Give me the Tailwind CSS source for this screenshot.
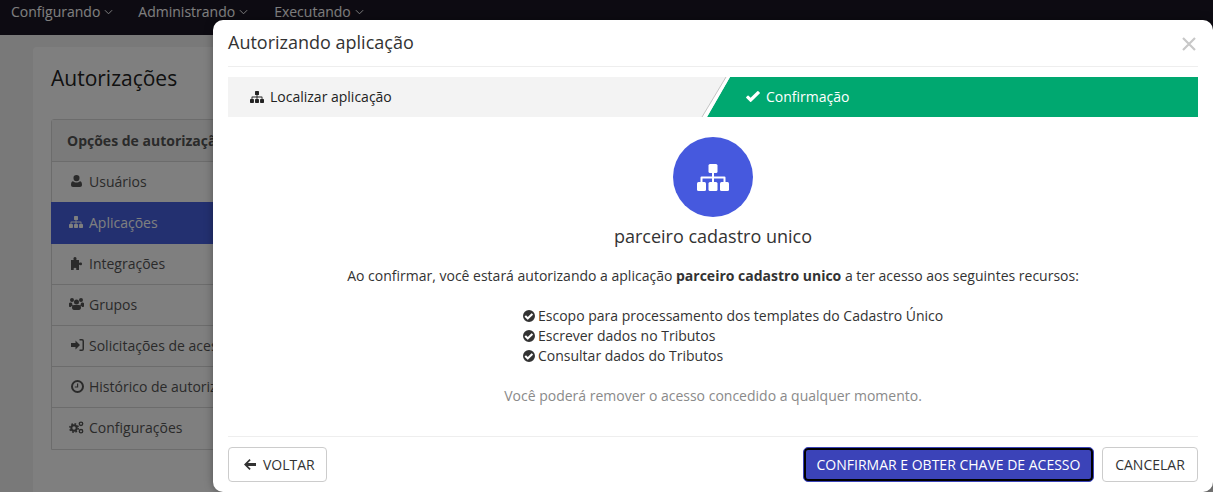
<!DOCTYPE html>
<html lang="pt">
<head>
<meta charset="utf-8">
<script src="https://cdn.jsdelivr.net/npm/@tailwindcss/browser@4"></script>
<title>Autorizações</title>
</head>
<body class="relative w-[1213px] h-[492px] overflow-hidden bg-[#f2f2f2] font-['Open_Sans',sans-serif] text-[14px] text-[#333]">
  <svg class="hidden">
    <defs>
      <symbol id="sitemap" viewBox="0 0 32 27"><g fill="currentColor"><rect x="11.500" y="0" width="9" height="9" rx="1.500"/><rect x="0" y="18" width="9" height="9" rx="1.500"/><rect x="11.500" y="18" width="9" height="9" rx="1.500"/><rect x="23" y="18" width="9" height="9" rx="1.500"/><path d="M15 9h2v3.500h10.500a1 1 0 0 1 1 1V18h-2v-3.500H17V18h-2v-3.500H5.500V18h-2v-4.500a1 1 0 0 1 1-1H15z"/></g></symbol>
      <symbol id="checkc" viewBox="0 0 24 24"><path fill="currentColor" fill-rule="evenodd" d="M12 0a12 12 0 1 1 0 24a12 12 0 0 1 0-24zM10.200 19.200l9.400-9.400a1 1 0 0 0 0-1.400l-1.600-1.600a1 1 0 0 0-1.400 0L9.500 14l-2.900-2.900a1 1 0 0 0-1.400 0l-1.600 1.600a1 1 0 0 0 0 1.400l5.200 5.100a1 1 0 0 0 1.400 0z"/></symbol>
      <symbol id="chev" viewBox="0 0 10 6"><path fill="none" stroke="currentColor" stroke-width="1.100" d="M1 1l4 4 4-4"/></symbol>
    </defs>
  </svg>

  <header class="h-[35px] bg-[#1a1624] text-white flex items-start pl-[11px] gap-[25px] text-[14px]">
    <a class="flex items-center gap-[4px] h-[23px]">Configurando <svg class="w-[9px] h-[6px] mt-[1px]"><use href="#chev"/></svg></a>
    <a class="flex items-center gap-[4px] h-[23px]">Administrando <svg class="w-[9px] h-[6px] mt-[1px]"><use href="#chev"/></svg></a>
    <a class="flex items-center gap-[4px] h-[23px] ml-[1px]">Executando <svg class="w-[9px] h-[6px] mt-[1px]"><use href="#chev"/></svg></a>
  </header>

  <main class="ml-[33px] mt-[12px] w-[1147px] h-[445px] bg-white rounded-t-[4px] px-[18px] pt-[13px]">
    <h1 class="text-[21px] leading-[36px] text-[#222] mb-[23px]">Autorizações</h1>
    <nav class="w-[400px] border border-[#d9d9d9] rounded-t-[3px] text-[14px] text-[#555]">
      <div class="h-[42px] bg-[#f5f5f5] border-b border-[#d9d9d9] pl-[15px] flex items-center font-bold">Opções de autorização</div>
      <a class="h-[41px] pb-[2px] border-b border-[#d9d9d9] flex items-center pl-[19px] gap-[7px]">
        <svg class="w-[11px] h-[12px]" viewBox="0 0 11 12"><path fill="currentColor" d="M5.500 0a3 3 0 0 1 3 3.200 3 3 0 0 1-6 0A3 3 0 0 1 5.500 0zM2 6.300c1 .9 2.200 1.200 3.500 1.200S8 7.200 9 6.300c1.300.2 2 1.500 2 3.500 0 1.400-.8 2.200-2 2.200H2C.8 12 0 11.200 0 9.800c0-2 .7-3.300 2-3.500z"/></svg>Usuários</a>
      <a class="h-[42px] pb-[2px] -mx-px -mt-px bg-[#4660e0] text-white flex items-center pl-[18px] gap-[6px]">
        <svg class="w-[14px] h-[12px]"><use href="#sitemap"/></svg><span>Aplicações</span></a>
      <a class="h-[41px] pb-[2px] border-b border-[#d9d9d9] flex items-center pl-[18px] gap-[5px]">
        <svg class="w-[14px] h-[13px]" viewBox="0 0 14 13"><path fill="currentColor" d="M1 3h2.700C3 1 3.800 0 5 0s2 1 1.300 3H9v3c1.600-.8 3-.5 3 .9S10.600 8.600 9 7.800V13H6.200c.5-1.300 0-2.200-1.200-2.200S3.300 11.700 3.800 13H1z"/></svg>Integrações</a>
      <a class="h-[41px] pb-[2px] border-b border-[#d9d9d9] flex items-center pl-[17px] gap-[5px]">
        <svg class="w-[15px] h-[12px]" viewBox="0 0 15 12"><path fill="currentColor" d="M3 0a2 2 0 1 1 0 4 2 2 0 0 1 0-4zM12 0a2 2 0 1 1 0 4 2 2 0 0 1 0-4zM7.500 1.500a2.500 2.500 0 1 1 0 5 2.500 2.500 0 0 1 0-5zM0 5.500C0 4.700 1 4.500 1.800 4.500c.5 0 1 .2 1.300.5-.1 1 .3 1.900 1 2.500C2.900 7.700 2.300 8.400 2 9H1C.4 9 0 8.600 0 8zM15 5.500c0-.8-1-1-1.800-1-.5 0-1 .2-1.300.5.100 1-.3 1.900-1 2.500 1.200.2 1.800.9 2.100 1.500h1c.6 0 1-.4 1-1zM5 7h5c1.300 0 2 1 2 2.500C12 11 11.300 12 10 12H5c-1.300 0-2-1-2-2.500C3 8 3.700 7 5 7z"/></svg>Grupos</a>
      <a class="h-[41px] pb-[2px] border-b border-[#d9d9d9] flex items-center pl-[18px] gap-[5px]">
        <svg class="w-[14px] h-[12px]" viewBox="0 0 14 12"><path fill="currentColor" d="M5.500 1.500L10 6l-4.500 4.500V8H1V4h4.500zM9.500 0H12a2 2 0 0 1 2 2v8a2 2 0 0 1-2 2H9.500v-1.500H12a.5.5 0 0 0 .5-.5V2a.5.5 0 0 0-.5-.5H9.500z"/></svg>Solicitações de acesso</a>
      <a class="h-[41px] pb-[2px] border-b border-[#d9d9d9] flex items-center pl-[19px] gap-[5px]">
        <svg class="w-[13px] h-[13px]" viewBox="0 0 13 13"><path fill="currentColor" fill-rule="evenodd" d="M6.500 0a6.500 6.500 0 1 1 0 13 6.500 6.500 0 0 1 0-13zm0 2a4.500 4.500 0 1 0 0 9 4.500 4.500 0 0 0 0-9zM6 3.500h1.200V7.500H3.800V6.400H6z"/></svg>Histórico de autorizações</a>
      <a class="h-[41px] pb-[2px] flex items-center pl-[17px] gap-[5px]">
        <svg class="w-[15px] h-[13px]" viewBox="0 0 15 13"><circle cx="5" cy="7" r="2.700" fill="none" stroke="currentColor" stroke-width="2"/><circle cx="5" cy="7" r="4.200" fill="none" stroke="currentColor" stroke-width="1.600" stroke-dasharray="1.700 1.600"/><circle cx="12" cy="2.800" r="1.700" fill="none" stroke="currentColor" stroke-width="1.400"/><circle cx="12" cy="10.200" r="1.700" fill="none" stroke="currentColor" stroke-width="1.400"/></svg>Configurações</a>
    </nav>
  </main>

  <div class="absolute inset-0 bg-black/50"></div>

  <section class="absolute left-[213px] top-[20px] w-[1000px] h-[472px] bg-white rounded-[10px] px-[15px] text-[14px] text-[#333] shadow-[0_0_8px_rgba(0,0,0,0.35)]">
    <div class="h-[47px] border-b border-[#eeeeee] flex items-center justify-between">
      <h2 class="text-[18px] text-[#333] -mt-[2px]">Autorizando aplicação</h2>
      <svg class="w-[14px] h-[14px] mr-[2px] mt-[1px]" viewBox="0 0 14 14"><path stroke="#c8c8c8" stroke-width="2.200" d="M1 1l12 12M13 1L1 13"/></svg>
    </div>
    <div class="mt-[10px] h-[40px] bg-[#f3f3f3] relative overflow-hidden flex items-center w-[970px]">
      <div class="flex items-center gap-[6px] pl-[22px] text-[#222] -mt-[1px]"><svg class="w-[14px] h-[12px]"><use href="#sitemap"/></svg>Localizar aplicação</div>
      <svg class="absolute left-[472px] top-0 w-[498px] h-[40px]" viewBox="0 0 498 40"><path d="M30 0H498V40H7z" fill="#00a870"/><path d="M26 0H30L7 40H2z" fill="#fff"/><path d="M26 0L2 40" stroke="#c4c4c4" stroke-width="1" fill="none"/></svg>
      <div class="absolute left-[518px] top-0 h-[39px] flex items-center gap-[6px] text-white"><svg class="w-[14px] h-[11px]" viewBox="0 0 14 11"><path fill="currentColor" d="M5.200 10.800a.8.800 0 0 1-1.100 0L.3 7a.8.800 0 0 1 0-1.100l1.200-1.200a.8.800 0 0 1 1.100 0l2 2L11.300.3a.8.800 0 0 1 1.100 0l1.300 1.200a.8.800 0 0 1 0 1.100z"/></svg>Confirmação</div>
    </div>
    <div class="flex flex-col items-center">
      <div class="mt-[20px] w-[80px] h-[80px] rounded-full bg-[#4659de] text-white flex items-center justify-center"><svg class="w-[32px] h-[27px]"><use href="#sitemap"/></svg></div>
      <p class="mt-[7px] text-[18px] leading-[24px] text-[#333]">parceiro cadastro unico</p>
      <p class="mt-[18px] leading-[20px] text-[#333]">Ao confirmar, você estará autorizando a aplicação <strong class="font-bold">parceiro cadastro unico</strong> a ter acesso aos seguintes recursos:</p>
      <ul class="mt-[20px] self-start ml-[295px] leading-[20px]">
        <li class="flex items-center gap-[3px]"><svg class="w-[12px] h-[12px]"><use href="#checkc"/></svg>Escopo para processamento dos templates do Cadastro Único</li>
        <li class="flex items-center gap-[3px]"><svg class="w-[12px] h-[12px]"><use href="#checkc"/></svg>Escrever dados no Tributos</li>
        <li class="flex items-center gap-[3px]"><svg class="w-[12px] h-[12px]"><use href="#checkc"/></svg>Consultar dados do Tributos</li>
      </ul>
      <p class="mt-[20px] leading-[20px] text-[#8a8a8a]">Você poderá remover o acesso concedido a qualquer momento.</p>
    </div>
    <div class="mt-[30px] border-t border-[#eeeeee] pt-[10px] flex items-center justify-between">
      <button class="h-[35px] w-[99px] border border-[#cccccc] rounded-[4px] bg-white text-[#333] flex items-center pl-[15px] gap-[7px] text-[14px]"><svg class="w-[12px] h-[11px]" viewBox="0 0 12 11"><path fill="currentColor" d="M5.500 0l1.200 1.200L3.900 4.100H12v2.800H3.900l2.800 2.900L5.500 11 0 5.500z"/></svg>VOLTAR</button>
      <div class="flex items-center gap-[8px]">
        <button class="h-[35px] w-[291px] rounded-[5px] bg-[#3b43b8] text-white text-[14px] border border-[#3b43b8] shadow-[inset_0_0_0_2px_#000]">CONFIRMAR E OBTER CHAVE DE ACESSO</button>
        <button class="h-[35px] w-[96px] border border-[#cccccc] rounded-[4px] bg-white text-[#333] text-[14px]">CANCELAR</button>
      </div>
    </div>
  </section>
</body>
</html>
